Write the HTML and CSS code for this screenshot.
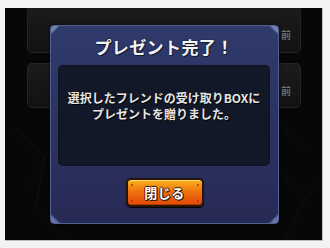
FILE: index.html
```html
<!DOCTYPE html>
<html lang="ja">
<head>
<meta charset="utf-8">
<link rel="stylesheet" href="styles.css">
</head>
<body>
<div class="screen">
  <div class="cards">
    <div class="card card-first"><span class="ago">前</span></div>
    <div class="card"><span class="ago">前</span></div>
  </div>
  <svg class="bg-lines" width="317" height="232" viewBox="0 0 317 232">
    <path d="M10 120 L40 150 L30 200 L60 232 M40 150 L20 180 M260 150 L300 190 L317 170 M300 190 L280 232 M270 110 L300 140" stroke="#101010" stroke-width="1" fill="none"/>
  </svg>
  <div class="dialog">
    <div class="title">プレゼント完了！</div>
    <div class="panel">
      <p class="msg">選択したフレンドの受け取りBOXに<br>プレゼントを贈りました。</p>
    </div>
    <div class="actions">
      <button class="btn"><span class="dot tl"></span><span class="dot tr"></span><span class="dot bl"></span><span class="dot br"></span>閉じる</button>
    </div>
  </div>
</div>
</body>
</html>
```
FILE: styles.css
```css
html, body {
  margin: 0;
  padding: 0;
  background: #f3f3f3;
  font-family: "Noto Sans CJK JP", "Noto Sans", sans-serif;
}
.screen {
  position: relative;
  margin: 8px 0 0 5px;
  width: 317px;
  height: 232px;
  background: #070707;
  overflow: hidden;
  border-right: 1px solid #bdbdbd;
  border-bottom: 1px solid #bdbdbd;
  box-sizing: content-box;
}
.bg-lines {
  position: absolute;
  left: 0;
  top: 0;
}
.cards {
  display: flex;
  flex-direction: column;
  gap: 10px;
  padding: 0 21px 0 22px;
}
.card {
  position: relative;
  height: 45px;
  background: linear-gradient(#1b1b1b, #121212);
  border: 1px solid #252525;
  border-radius: 5px;
  box-sizing: border-box;
  display: flex;
  justify-content: flex-end;
  align-items: center;
  padding-right: 9px;
}
.card-first {
  margin-top: -2px;
  height: 47px;
}
.ago {
  color: #6d6d6d;
  font-size: 10px;
  font-weight: 700;
  margin-top: 10px;
}
.dialog {
  position: absolute;
  left: 45px;
  top: 17px;
  width: 229px;
  height: 199px;
  box-sizing: border-box;
  border: 1px solid #50608f;
  border-radius: 4px;
  background:
    linear-gradient(135deg, #6f7fae 0 5px, #3d4d82 5px 7px, transparent 7px) top left / 12px 12px no-repeat,
    linear-gradient(225deg, #6f7fae 0 5px, #3d4d82 5px 7px, transparent 7px) top right / 12px 12px no-repeat,
    linear-gradient(45deg, #6474a6 0 5px, #3d4d82 5px 7px, transparent 7px) bottom left / 12px 12px no-repeat,
    linear-gradient(315deg, #6474a6 0 5px, #3d4d82 5px 7px, transparent 7px) bottom right / 12px 12px no-repeat,
    linear-gradient(#2f3b6b, #2b3161 55%, #282a55);
  display: flex;
  flex-direction: column;
  padding: 0 8px 0 7px;
  box-shadow: 0 0 3px rgba(0,0,0,0.6);
}
.title {
  height: 39px;
  display: flex;
  align-items: center;
  justify-content: center;
  color: #f4f4f4;
  font-size: 17px;
  font-weight: 700;
  letter-spacing: 0.4px;
  padding-top: 2px;
  box-sizing: border-box;
  text-shadow: 1px 1px 0 #111a33, 0 0 2px #111a33;
}
.panel {
  height: 101px;
  background: #121827;
  border-radius: 5px;
  box-shadow: inset 0 0 2px #0a0e18, 0 0 1px #3a4676;
  padding-top: 25px;
  box-sizing: border-box;
}
.msg {
  margin: 0;
  text-align: center;
  color: #e6e6e6;
  font-size: 12px;
  line-height: 16px;
  font-weight: 700;
  text-shadow: 1px 1px 0 #000;
}
.actions {
  display: flex;
  justify-content: center;
  padding-top: 12px;
  padding-left: 1px;
}
.btn {
  position: relative;
  width: 78px;
  height: 29px;
  padding: 0;
  border: 2px solid #241608;
  border-radius: 5px;
  background: linear-gradient(#f9b428 0, #f59a18 18%, #ee7410 45%, #e85a0a 75%, #de4c06 100%);
  box-shadow: inset 0 1px 0 #ffd860, inset 0 -1px 0 #b83a02, 0 1px 1px #000;
  color: #fff;
  font-family: "Noto Sans CJK JP", sans-serif;
  font-size: 13px;
  font-weight: 700;
  letter-spacing: 0.5px;
  text-shadow: 1px 1px 0 #3a1a05, -1px 0 0 #3a1a05, 0 -1px 0 #3a1a05, 1px 0 0 #3a1a05, 0 1px 0 #3a1a05;
}
.dot {
  position: absolute;
  width: 2px;
  height: 2px;
  border-radius: 50%;
  background: #c8280a;
}
.dot.tl { left: 3px; top: 4px; }
.dot.tr { right: 3px; top: 4px; }
.dot.bl { left: 3px; bottom: 3px; }
.dot.br { right: 3px; bottom: 3px; }
```
